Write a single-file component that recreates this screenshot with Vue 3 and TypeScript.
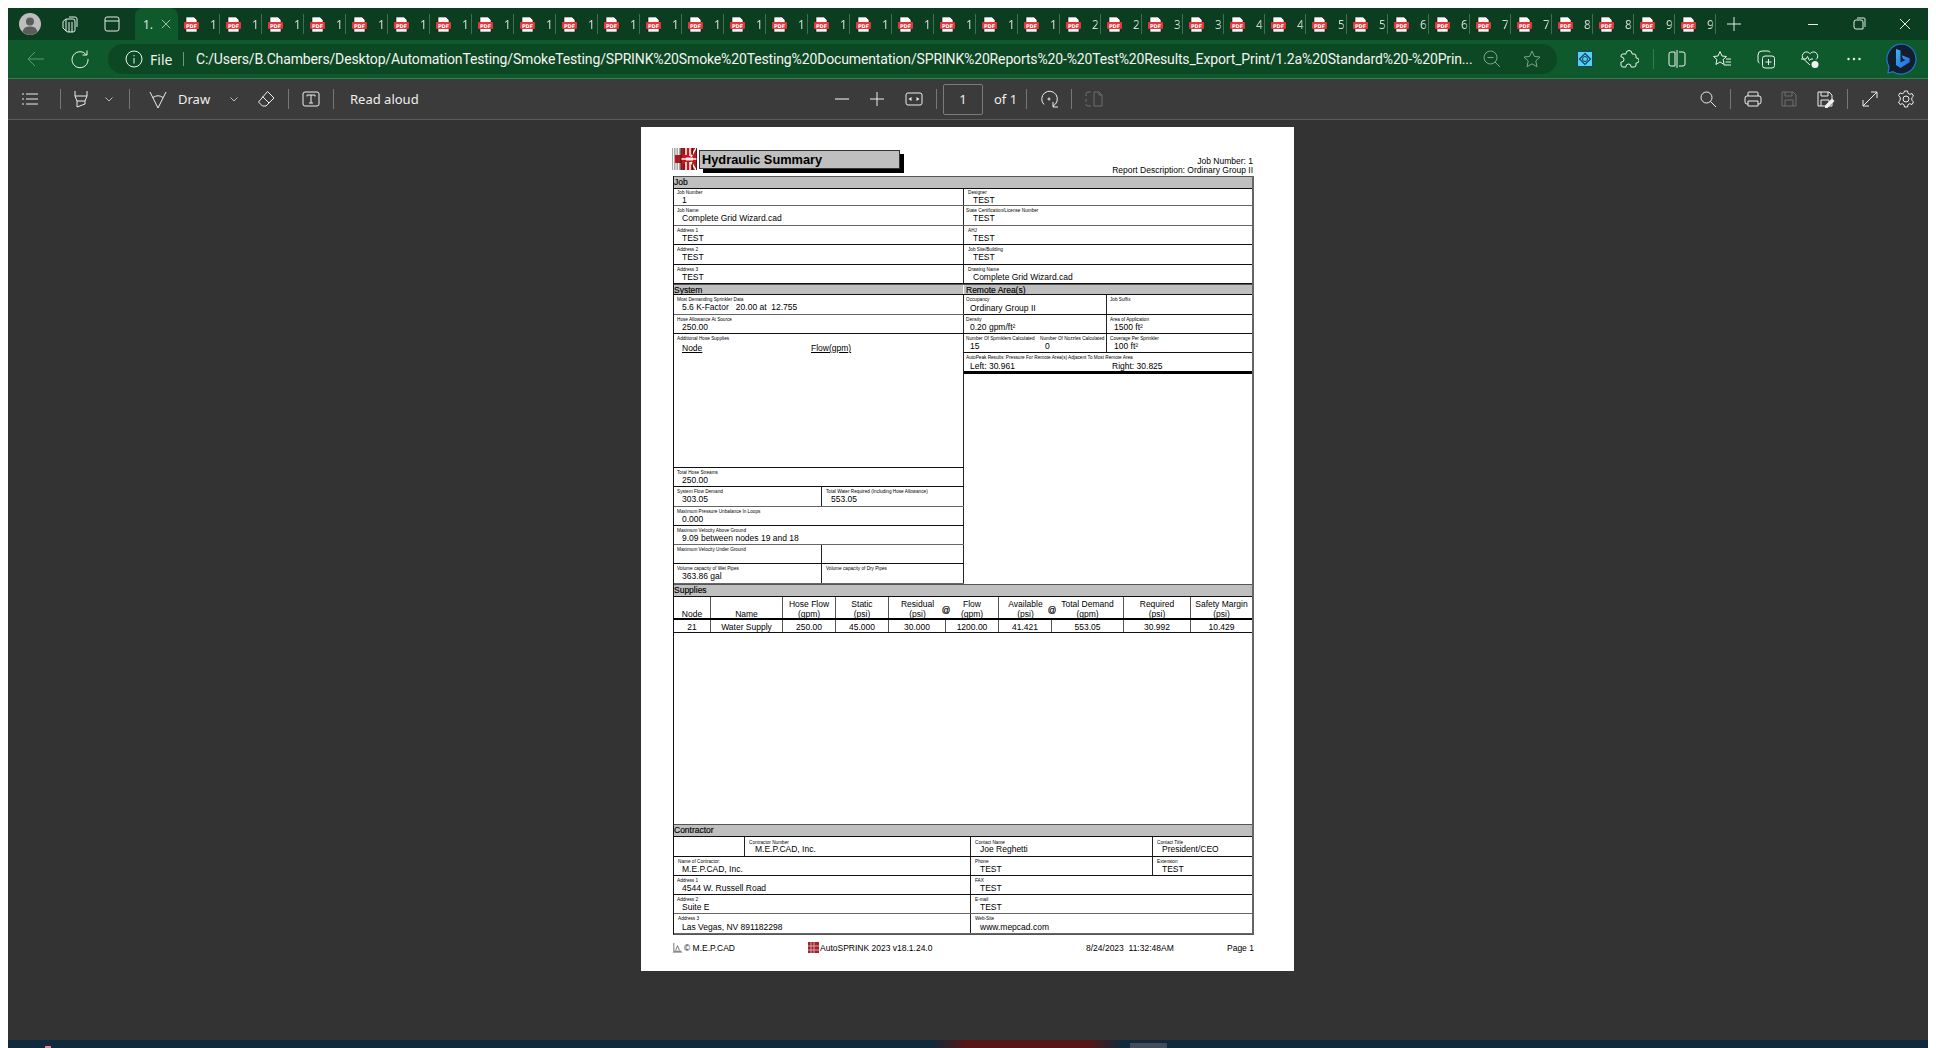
<template>
  <div class="desktop">
    <div class="window">
      <!-- tab strip -->
      <div class="tabstrip">
        <div class="avatar">
          <svg viewBox="0 0 22 22" width="22" height="22"><circle cx="11" cy="11" r="11" fill="#bdbdbd" /><circle cx="11" cy="8.5" r="4" fill="#5c5c5c" /><path d="M3.5 19c1-4.500 4-5.500 7.500-5.500s6.500 1 7.500 5.500a11 11 0 0 1-15 0z" fill="#5c5c5c" /></svg>
        </div>
        <svg class="ico ws" viewBox="0 0 20 20"><path d="M9 3h6a2 2 0 0 1 2 2v8M6 5h7a2 2 0 0 1 2 2v9a2 2 0 0 1-2 2H8a2 2 0 0 1-2-2zM3 7.500l3-2.500M3 7.500V14l3 3M9 8v10M12 8v10" /></svg>
        <svg class="ico acts" viewBox="0 0 20 20"><path d="M5 3h10a2 2 0 0 1 2 2v10a2 2 0 0 1-2 2H5a2 2 0 0 1-2-2V5a2 2 0 0 1 2-2zM3 7h14" /></svg>
        <div class="tab-active">
          <span>1.</span>
          <svg class="ico x" viewBox="0 0 20 20"><path d="M4 4l12 12M16 4L4 16" /></svg>
        </div>
        <div v-for="(n, i) in tabNumbers" :key="i" class="tab" :class="{ wide: i < 21 }">
          <svg class="pdf" viewBox="0 0 15 15" width="15" height="15">
            <path d="M2 0h8l3 3v12H2z" fill="#fff" stroke="#111" stroke-width=".6" />
            <rect x="0" y="5" width="15" height="7" rx="1" fill="#e8353a" />
            <text x="7.500" y="10.500" text-anchor="middle" class="pdf-text">PDF</text>
          </svg>
          <span class="tab-num">{{ n }}</span>
        </div>
        <svg class="ico plus" viewBox="0 0 20 20"><path d="M10 3v14M3 10h14" /></svg>
        <svg class="ico min" viewBox="0 0 20 20"><path d="M5 10.500h10" /></svg>
        <svg class="ico caption" viewBox="0 0 20 20"><path d="M5 8a2 2 0 0 1 2-2h5a2 2 0 0 1 2 2v7H7a2 2 0 0 1-2-2zM8 4h7a1 1 0 0 1 1 1v8" /></svg>
        <svg class="ico caption" viewBox="0 0 20 20"><path d="M5 5l10 10M15 5L5 15" /></svg>
      </div>

      <!-- address bar -->
      <div class="addressbar">
        <svg class="ico back" viewBox="0 0 20 20"><path d="M18 10H3M9 3l-7 7 7 7" /></svg>
        <svg class="ico reload" viewBox="0 0 20 20"><path d="M16.500 6A8 8 0 1 0 18 10M17 1.500V6h-4.500" /></svg>
        <div class="pill">
          <svg class="ico info" viewBox="0 0 20 20"><path d="M10 2a8 8 0 1 0 0 16 8 8 0 0 0 0-16zM10 9v5.500M10 6v1.300" /></svg>
          <span class="file">File</span>
          <i class="addr-sep"></i>
          <span class="url">C:/Users/B.Chambers/Desktop/AutomationTesting/SmokeTesting/SPRINK%20Smoke%20Testing%20Documentation/SPRINK%20Reports%20-%20Test%20Results_Export_Print/1.2a%20Standard%20-%20Prin...</span>
          <svg class="ico dim" viewBox="0 0 20 20"><path d="M8.500 2a6.500 6.500 0 1 0 0 13 6.500 6.500 0 0 0 0-13zM13 13l5 5M5.500 8.500h6" /></svg>
          <svg class="ico dim star" viewBox="0 0 20 20"><path d="M10 2l2.400 5.400 5.600.6-4.200 3.900 1.200 5.800-5-2.900-5 2.900 1.200-5.800L2 8l5.600-.6z" /></svg>
        </div>
        <svg class="ext" viewBox="0 0 16 16" width="16" height="16">
          <rect width="16" height="16" fill="#1c3f6e" />
          <rect x="1" y="1" width="14" height="14" fill="#52d3ee" />
          <path d="M8 2.500L13.500 8 8 13.500 2.500 8z" fill="none" stroke="#17406a" stroke-width="1.200" />
          <circle cx="8" cy="8" r="2.500" fill="none" stroke="#17406a" />
        </svg>
        <template v-for="(b, i) in addressButtons" :key="i">
          <i v-if="!b.d && !b.solid" class="bar-sep" :style="{ marginLeft: b.ml + 'px' }"></i>
          <svg v-else class="ico" viewBox="0 0 20 20" :style="{ marginLeft: b.ml + 'px' }">
            <path :d="b.d" />
            <path v-if="b.solid" :d="b.solid" class="solid" />
          </svg>
        </template>
        <svg class="bing" viewBox="0 0 32 32" width="32" height="32">
          <defs>
            <linearGradient id="bingFill" x1="0" y1="0" x2="1" y2="1">
              <stop offset="0" stop-color="#37b5f0" />
              <stop offset="1" stop-color="#2460e0" />
            </linearGradient>
          </defs>
          <path d="M16 1a15 15 0 1 1-8 27.700L3 30l1-6.500A15 15 0 0 1 16 1z" fill="#141d2b" stroke="#1c78d8" stroke-width="1.200" />
          <path d="M11 6l4.500 1.500v12l5-2.500-2.500-1.200-1.300-3.500 8 3v4L15.500 25 11 22z" fill="url(#bingFill)" />
        </svg>
      </div>

      <!-- pdf toolbar -->
      <div class="toolbar">
        <div v-for="(group, g) in toolGroups" :key="g" class="tool-group" :class="'group-' + g">
          <template v-for="(t, i) in group" :key="i">
            <i v-if="t.kind === 'sep'" class="tool-sep" :style="{ marginLeft: t.ml + 'px' }"></i>
            <svg v-else-if="t.kind === 'chev'" class="chev" viewBox="0 0 10 10" :style="{ marginLeft: t.ml + 'px' }"><path d="M1.500 3.500L5 7l3.500-3.500" /></svg>
            <span v-else-if="t.kind === 'text'" class="tool-text" :class="{ draw: t.label === 'Draw', count: t.label === 'of 1' }" :style="{ marginLeft: t.ml + 'px' }">{{ t.label }}</span>
            <span v-else-if="t.kind === 'input'" class="page-input" :style="{ marginLeft: t.ml + 'px' }">1</span>
            <svg v-else class="ico" :class="{ off: t.off, muted: t.muted }" viewBox="0 0 20 20" :style="{ marginLeft: t.ml + 'px' }">
              <path :d="t.d" />
              <path v-if="t.solid" :d="t.solid" class="solid" />
            </svg>
          </template>
        </div>
      </div>

      <!-- viewer -->
      <div class="viewer">
        <div class="page">
          <div class="report-head">
            <svg class="logo" viewBox="0 0 25 24" width="25" height="24">
              <rect width="25" height="24" fill="#fff" />
              <rect x="0" y="1" width="9" height="22" fill="#a8a8a8" />
              <path d="M1.500 1v22M4 1v22M6.500 1v22" stroke="#fff" stroke-width=".9" />
              <path d="M3 8h6v8H3z" fill="#b3171e" />
              <rect x="9" y="1" width="16" height="22" fill="#c8161d" />
              <path d="M14 1v7M18 1v8M24 1l-5 9M9 12h16M14 23v-8M18 23v-8M24 23l-5-8" stroke="#fff" stroke-width="1.500" />
              <path d="M9 1v22M12 1v6M12 17v6M20.500 1v7M20.500 16v7M24.700 1v22" stroke="#1c1c1c" stroke-width=".8" />
              <rect x="14" y="10.500" width="7" height="3" fill="#eee" />
            </svg>
            <div class="title-box">Hydraulic Summary</div>
            <div class="head-right">
              <div>Job Number: 1</div>
              <div>Report Description: Ordinary Group II</div>
            </div>
          </div>

          <div class="frame">
            <div class="band">Job</div>
            <div v-for="(r, i) in jobRows" :key="i" class="row" :class="{ soft: r.soft, tight: r.tight }" :style="{ height: r.h + 'px' }">
              <div v-for="(c, j) in r.cells" :key="j" class="cell" :class="{ open: c.open }" :style="{ flex: c.w ? '0 0 ' + c.w + 'px' : '1' }">
                <div class="label" :style="{ paddingLeft: c.lx + 'px' }">{{ c.label }}</div>
                <div class="vals"><span :style="{ paddingLeft: c.vx + 'px' }">{{ c.value }}</span></div>
              </div>
            </div>

            <div class="band split-band"><span>System</span><span>Remote Area(s)</span></div>
            <div class="columns">
              <div class="col-left">
                <div v-for="(r, i) in systemRows" :key="i" class="row" :class="{ soft: r.soft, drop2: r.drop === 2 }" :style="{ height: r.h + 'px' }">
                  <div v-for="(c, j) in r.cells" :key="j" class="cell" :class="{ open: c.open }" :style="{ flex: c.w ? '0 0 ' + c.w + 'px' : '1' }">
                    <div class="label" :style="{ paddingLeft: c.lx + 'px' }">{{ c.label }}</div>
                    <div class="vals"><span :style="{ paddingLeft: c.vx + 'px', width: c.v2x ? c.v2x + 'px' : 'auto' }"><u v-if="c.under">{{ c.value }}</u><template v-else>{{ c.value }}</template></span><span v-if="c.value2" class="under">{{ c.value2 }}</span></div>
                  </div>
                </div>
              </div>
              <div class="col-right">
                <div v-for="(r, i) in remoteRows" :key="i" class="row" :class="{ heavy: r.heavy, drop1: r.drop === 1 }" :style="{ height: r.h + 'px' }">
                  <div v-for="(c, j) in r.cells" :key="j" class="cell" :class="{ open: c.open }" :style="{ flex: c.w ? '0 0 ' + c.w + 'px' : '1' }">
                    <div class="label" :style="{ paddingLeft: c.lx + 'px' }">{{ c.label }}</div>
                    <div class="vals"><span :style="{ paddingLeft: c.vx + 'px', width: c.v2x ? c.v2x + 'px' : 'auto' }">{{ c.value }}</span><span v-if="c.value2">{{ c.value2 }}</span></div>
                  </div>
                </div>
              </div>
            </div>

            <div class="band">Supplies</div>
            <div class="sup-head">
              <div class="sup-col c-node">&nbsp;<br />Node</div>
              <div class="sup-col c-name">&nbsp;<br />Name</div>
              <div class="sup-col c-hose">Hose Flow<br />(gpm)</div>
              <div class="sup-col c-static">Static<br />(psi)</div>
              <div class="sup-col c-res no-line">Residual<br />(psi)</div>
              <div class="at">@</div>
              <div class="sup-col c-flow">Flow<br />(gpm)</div>
              <div class="sup-col c-avail no-line">Available<br />(psi)</div>
              <div class="at">@</div>
              <div class="sup-col c-total">Total Demand<br />(gpm)</div>
              <div class="sup-col c-req">Required<br />(psi)</div>
              <div class="sup-col c-safe">Safety Margin<br />(psi)</div>
            </div>
            <div class="sup-row">
              <div class="sup-cell c-node">21</div>
              <div class="sup-cell c-name">Water Supply</div>
              <div class="sup-cell c-hose">250.00</div>
              <div class="sup-cell c-static">45.000</div>
              <div class="sup-cell c-res">30.000</div>
              <div class="sup-cell c-flow">1200.00</div>
              <div class="sup-cell c-avail">41.421</div>
              <div class="sup-cell c-total">553.05</div>
              <div class="sup-cell c-req">30.992</div>
              <div class="sup-cell c-safe">10.429</div>
            </div>
            <div class="sup-empty"></div>

            <div class="band">Contractor</div>
            <div v-for="(r, i) in contractorRows" :key="i" class="row" :class="{ soft: r.soft, low: r.low, drop1: r.drop === 1 }" :style="{ height: r.h + 'px' }">
              <div v-for="(c, j) in r.cells" :key="j" class="cell" :class="{ open: c.open }" :style="{ flex: c.w ? '0 0 ' + c.w + 'px' : '1' }">
                <div class="label" :style="{ paddingLeft: c.lx + 'px' }">{{ c.label }}</div>
                <div class="vals"><span :style="{ paddingLeft: c.vx + 'px' }">{{ c.value }}</span></div>
              </div>
            </div>
          </div>

          <div class="report-foot">
            <div class="foot-a">
              <svg viewBox="0 0 12 12" width="11" height="11"><path d="M2 1v9h8M4 9l2-5 2 5M1 11h10" fill="none" stroke="#444" stroke-width=".8" /></svg>
              <span>© M.E.P.CAD</span>
            </div>
            <div class="foot-b">
              <svg viewBox="0 0 11 11" width="11" height="11"><rect width="11" height="11" fill="#a5222a" /><path d="M3 0v11M6 0v11M0 4h11M0 8h11" stroke="#ddd" stroke-width=".7" /></svg>
              <span>AutoSPRINK 2023 v18.1.24.0</span>
            </div>
            <div class="foot-c">8/24/2023&nbsp; 11:32:48AM</div>
            <div class="foot-d">Page 1</div>
          </div>
        </div>
      </div>
    </div>
    <div class="wallpaper">
      <i class="wp-glow"></i>
      <i class="wp-pin"></i>
      <i class="wp-thumb"></i>
    </div>
  </div>
</template>

<script setup lang="ts">
interface Cell {
  label: string
  value?: string
  value2?: string
  w?: number
  lx?: number
  vx?: number
  v2x?: number
  under?: boolean
  open?: boolean
}

interface Row {
  h: number
  cells: Cell[]
  soft?: boolean
  tight?: boolean
  heavy?: boolean
  low?: boolean
  drop?: number
}

interface Tool {
  kind: 'icon' | 'sep' | 'chev' | 'text' | 'input'
  ml: number
  d?: string
  solid?: string
  label?: string
  off?: boolean
  muted?: boolean
}

// 21 tabs titled 1.x, then two each for 2 to 9
const tabNumbers: number[] = [...Array(21).fill(1)]
for (let n = 2; n <= 9; n++) tabNumbers.push(n, n)

const savePath = 'M3 3h11l3 3v11H3zM6 3v4h7V3M6 17v-6h8v6'

const addressButtons: { ml: number; d?: string; solid?: string }[] = [
  { ml: 26, d: 'M7 5v-.5a3 3 0 0 1 6 0V5h2a2 2 0 0 1 2 2v2h.5a2.500 2.500 0 0 1 0 5H17v2a2 2 0 0 1-2 2h-3v-.5a2.500 2.500 0 0 0-5 0v.5H4a2 2 0 0 1-2-2v-3h.5a2.500 2.500 0 0 0 0-5H2V7a2 2 0 0 1 2-2z' },
  { ml: 14 },
  { ml: 13, d: 'M8 3H4a2 2 0 0 0-2 2v10a2 2 0 0 0 2 2h4zM12 3h4a2 2 0 0 1 2 2v10a2 2 0 0 1-2 2h-4M10 1v18' },
  { ml: 25, d: 'M8 2.500l2 4.500 4.500.5-3.400 3 1 5L8 13l-4.100 2.500 1-5-3.400-3L6 7zM14 10h5M13.500 13h5.500M12 16h7' },
  { ml: 24, d: 'M14 3.500a2 2 0 0 0-2-1.500H6a4 4 0 0 0-4 4v6a2 2 0 0 0 1.500 2M9 7h7a2.500 2.500 0 0 1 2.500 2.500v7A2.500 2.500 0 0 1 16 19H9a2.500 2.500 0 0 1-2.500-2.500v-7A2.500 2.500 0 0 1 9 7zM12.500 10v6M9.500 13h6' },
  { ml: 24, d: 'M10 16L3 9.500a4.200 4.200 0 0 1 7-4.700 4.200 4.200 0 0 1 7 4.700l-1 1M1 10h5l1.500-2.500 2 4 1.500-1.500h2', solid: 'M15 12a3.500 3.500 0 1 0 0 7 3.500 3.500 0 0 0 0-7z' },
  { ml: 24, d: '', solid: 'M4.500 8.800a1.200 1.200 0 1 0 0 2.400 1.200 1.200 0 0 0 0-2.400zM10 8.800a1.200 1.200 0 1 0 0 2.400 1.200 1.200 0 0 0 0-2.400zM15.500 8.800a1.200 1.200 0 1 0 0 2.400 1.200 1.200 0 0 0 0-2.400z' }
]

const toolGroups: Tool[][] = [
  [
    { kind: 'icon', ml: 12, d: 'M6 5h12M6 10h12M6 15h12M2 5h2M2 10h2M2 15h2' },
    { kind: 'sep', ml: 20 },
    { kind: 'icon', ml: 10, d: 'M4 2v5h12V2M4 7l2 5h8l2-5M6 12v6l8-3v-3' },
    { kind: 'chev', ml: 13 },
    { kind: 'sep', ml: 15 },
    { kind: 'icon', ml: 18, d: 'M2 3l8 16 8-16M5 8.500q5-3.500 10 0' },
    { kind: 'text', ml: 10, label: 'Draw' },
    { kind: 'chev', ml: 19 },
    { kind: 'icon', ml: 17, d: 'M11.500 2.500l6.500 6.500-8 8H6.500l-4-4zM6.500 7.500l6.500 6.500' },
    { kind: 'sep', ml: 12 },
    { kind: 'icon', ml: 12, d: 'M4 3h12a2 2 0 0 1 2 2v10a2 2 0 0 1-2 2H4a2 2 0 0 1-2-2V5a2 2 0 0 1 2-2zM6 7.500V6h8v1.500M10 6v8M8 14h4' },
    { kind: 'sep', ml: 12 },
    { kind: 'text', ml: 16, label: 'Read aloud' }
  ],
  [
    { kind: 'icon', ml: 0, d: 'M3 10h14', muted: true },
    { kind: 'icon', ml: 15, d: 'M10 3v14M3 10h14' },
    { kind: 'icon', ml: 17, d: 'M4 4h12a2 2 0 0 1 2 2v8a2 2 0 0 1-2 2H4a2 2 0 0 1-2-2V6a2 2 0 0 1 2-2z', solid: 'M4.500 10l3-2v4zM15.500 10l-3-2v4z' },
    { kind: 'sep', ml: 12 },
    { kind: 'input', ml: 6 },
    { kind: 'text', ml: 11, label: 'of 1' },
    { kind: 'sep', ml: 13 },
    { kind: 'icon', ml: 12, d: 'M5 15.500A7.800 7.800 0 1 1 14 17M14 13v5h5M11 10a1 1 0 1 1-2 0 1 1 0 0 1 2 0z' },
    { kind: 'sep', ml: 12 },
    { kind: 'icon', ml: 12, off: true, d: 'M10 3h5l3 3v11h-8zM15 3v3h3M7 3H4a2 2 0 0 0-2 2v2M2 10v3M2 15a2 2 0 0 0 2 2h3' }
  ],
  [
    { kind: 'icon', ml: 0, d: 'M8.500 3a5.500 5.500 0 1 0 0 11 5.500 5.500 0 0 0 0-11zM12.500 12.500L18 18' },
    { kind: 'sep', ml: 12 },
    { kind: 'icon', ml: 12, d: 'M5 7V4a1 1 0 0 1 1-1h8a1 1 0 0 1 1 1v3M5 15H4a2 2 0 0 1-2-2V9a2 2 0 0 1 2-2h12a2 2 0 0 1 2 2v4a2 2 0 0 1-2 2h-1M5 12h10v5H5z' },
    { kind: 'icon', ml: 16, off: true, d: savePath },
    { kind: 'icon', ml: 16, d: savePath, solid: 'M17 9.500l2.500 2.500-7 7H10v-2.500z' },
    { kind: 'sep', ml: 12 },
    { kind: 'icon', ml: 12, d: 'M11 3h6v6M17 3L3 17M3 11v6h6' },
    { kind: 'icon', ml: 16, d: 'M10 7a3 3 0 1 0 0 6 3 3 0 0 0 0-6zM8.500 2h3l.5 2.300 1.800 1 2.200-.8 1.500 2.600-1.700 1.600v2.600l1.700 1.600-1.500 2.600-2.200-.8-1.800 1-.5 2.300h-3l-.5-2.300-1.800-1-2.200.8-1.500-2.600 1.700-1.600V8.100L2.500 6.500 4 3.900l2.200.8 1.800-1z' }
  ]
]

const jobRows: Row[] = [
  { h: 17, tight: true, soft: true, cells: [
    { label: 'Job Number', value: '1', w: 290, lx: 3, vx: 8 },
    { label: 'Designer', value: 'TEST', lx: 4, vx: 9 }
  ] },
  { h: 20, soft: true, cells: [
    { label: 'Job Name:', value: 'Complete Grid Wizard.cad', w: 290, lx: 3, vx: 8 },
    { label: 'State Certification/License Number', value: 'TEST', lx: 2, vx: 9 }
  ] },
  { h: 19, cells: [
    { label: 'Address 1', value: 'TEST', w: 290, lx: 3, vx: 8 },
    { label: 'AHJ', value: 'TEST', lx: 4, vx: 9 }
  ] },
  { h: 20, cells: [
    { label: 'Address 2', value: 'TEST', w: 290, lx: 3, vx: 8 },
    { label: 'Job Site/Building', value: 'TEST', lx: 4, vx: 9 }
  ] },
  { h: 19, cells: [
    { label: 'Address 3', value: 'TEST', w: 290, lx: 3, vx: 8 },
    { label: 'Drawing Name', value: 'Complete Grid Wizard.cad', lx: 4, vx: 9 }
  ] }
]

const systemRows: Row[] = [
  { h: 20, soft: true, cells: [{ label: 'Most Demanding Sprinkler Data', value: '5.6 K-Factor   20.00 at  12.755', lx: 3, vx: 8 }] },
  { h: 19, cells: [{ label: 'Hose Allowance At Source', value: '250.00', lx: 3, vx: 8 }] },
  { h: 134, drop: 2, cells: [{ label: 'Additional Hose Supplies', value: 'Node', value2: 'Flow(gpm)', under: true, v2x: 129, lx: 3, vx: 8 }] },
  { h: 19, cells: [{ label: 'Total Hose Streams', value: '250.00', lx: 3, vx: 8 }] },
  { h: 20, soft: true, cells: [
    { label: 'System Flow Demand', value: '303.05', w: 148, lx: 3, vx: 8 },
    { label: 'Total Water Required (Including Hose Allowance)', value: '553.05', lx: 4, vx: 9 }
  ] },
  { h: 19, cells: [{ label: 'Maximum Pressure Unbalance In Loops', value: '0.000', lx: 3, vx: 8 }] },
  { h: 19, soft: true, cells: [{ label: 'Maximum Velocity Above Ground', value: '9.09 between nodes 19 and 18', lx: 3, vx: 8 }] },
  { h: 19, cells: [
    { label: 'Maximum Velocity Under Ground', w: 148, lx: 3 },
    { label: '', lx: 4 }
  ] },
  { h: 20, soft: true, cells: [
    { label: 'Volume capacity of Wet Pipes', value: '363.86 gal', w: 148, lx: 3, vx: 8 },
    { label: 'Volume capacity of Dry Pipes', lx: 4 }
  ] }
]

const remoteRows: Row[] = [
  { h: 20, drop: 1, cells: [
    { label: 'Occupancy', value: 'Ordinary Group II', w: 143, lx: 2, vx: 6 },
    { label: 'Job Suffix', lx: 3 }
  ] },
  { h: 19, cells: [
    { label: 'Density', value: '0.20 gpm/ft²', w: 143, lx: 2, vx: 6 },
    { label: 'Area of Application', value: '1500 ft²', lx: 3, vx: 7 }
  ] },
  { h: 19, cells: [
    { label: 'Number Of Sprinklers Calculated', value: '15', w: 76, lx: 2, vx: 6, open: true },
    { label: 'Number Of Nozzles Calculated', value: '0', w: 67, lx: 0, vx: 5 },
    { label: 'Coverage Per Sprinkler', value: '100 ft²', lx: 3, vx: 7 }
  ] },
  { h: 21, heavy: true, drop: 1, cells: [
    { label: 'AutoPeak Results: Pressure For Remote Area(s) Adjacent To Most Remote Area', value: 'Left: 30.961', value2: 'Right: 30.825', v2x: 142, lx: 2, vx: 6 }
  ] }
]

const contractorRows: Row[] = [
  { h: 20, low: true, cells: [
    { label: '', w: 71 },
    { label: 'Contractor Number', value: 'M.E.P.CAD, Inc.', w: 226, lx: 4, vx: 10 },
    { label: 'Contact Name', value: 'Joe Reghetti', w: 182, lx: 4, vx: 9 },
    { label: 'Contact Title', value: 'President/CEO', lx: 4, vx: 9 }
  ] },
  { h: 19, cells: [
    { label: 'Name of Contractor:', value: 'M.E.P.CAD, Inc.', w: 297, lx: 4, vx: 8 },
    { label: 'Phone', value: 'TEST', w: 182, lx: 4, vx: 9 },
    { label: 'Extension', value: 'TEST', lx: 4, vx: 9 }
  ] },
  { h: 19, cells: [
    { label: 'Address 1', value: '4544 W. Russell Road', w: 297, lx: 3, vx: 8 },
    { label: 'FAX', value: 'TEST', lx: 4, vx: 9 }
  ] },
  { h: 19, soft: true, cells: [
    { label: 'Address 2', value: 'Suite E', w: 297, lx: 3, vx: 8 },
    { label: 'E-mail', value: 'TEST', lx: 4, vx: 9 }
  ] },
  { h: 20, soft: true, drop: 1, cells: [
    { label: 'Address 3', value: 'Las Vegas, NV 891182298', w: 297, lx: 4, vx: 8 },
    { label: 'Web-Site', value: 'www.mepcad.com', lx: 4, vx: 9 }
  ] }
]
</script>

<style scoped>
.desktop {
  width: 1936px;
  height: 1048px;
  padding: 8px 8px 0;
  box-sizing: border-box;
  background: #fff;
  display: flex;
  flex-direction: column;
  font-family: "Noto Sans", "Open Sans", sans-serif;
  overflow: hidden;
}

.window {
  height: 1032px;
  display: flex;
  flex-direction: column;
  flex: none;
}

.wallpaper {
  height: 8px;
  background: #11293c;
  position: relative;
  overflow: hidden;
}

.wp-glow {
  position: absolute;
  left: 924px;
  top: 0;
  width: 190px;
  height: 8px;
  background: linear-gradient(90deg, #11293c, #561616 18%, #561616 82%, #11293c);
}

.wp-pin {
  position: absolute;
  left: 37px;
  top: 6px;
  width: 6px;
  height: 2px;
  background: #e58aa0;
}

.wp-thumb {
  position: absolute;
  left: 1122px;
  top: 3px;
  width: 37px;
  height: 5px;
  background: #444c58;
}

.ico {
  width: 20px;
  height: 20px;
  flex: none;
  fill: none;
  stroke: currentColor;
  stroke-width: 1;
}

.solid {
  fill: currentColor;
  stroke: none;
}

/* tab strip */
.tabstrip {
  height: 32px;
  background: #0b3e20;
  display: flex;
  align-items: center;
  color: #e6ece8;
  flex: none;
}

.avatar {
  margin-left: 11px;
  width: 22px;
  height: 22px;
  flex: none;
}

.ws {
  margin-left: 19px;
}

.acts {
  margin-left: 22px;
}

.tab-active {
  margin-left: 13px;
  width: 43px;
  height: 32px;
  box-sizing: border-box;
  flex: none;
  background: #0f5a2d;
  border-radius: 8px 8px 0 0;
  display: flex;
  align-items: center;
  padding-left: 8px;
  font-size: 12px;
  color: #dfe8e2;
}

.tab-active .x {
  width: 14px;
  height: 14px;
  margin-left: 6px;
}

.tab {
  width: 41px;
  height: 20px;
  box-sizing: border-box;
  flex: none;
  display: flex;
  align-items: center;
  padding-left: 6px;
  border-right: 1px solid #41704f;
}

.tab.wide {
  width: 42px;
}

.pdf {
  flex: none;
}

.pdf-text {
  font-family: "DejaVu Sans", sans-serif;
  font-size: 5px;
  font-weight: 700;
  fill: #fff;
}

.tab-num {
  margin-left: 11px;
  width: 8px;
  overflow: hidden;
  font-size: 12px;
  color: #d4ded7;
  -webkit-mask-image: linear-gradient(90deg, #000 50%, transparent);
  mask-image: linear-gradient(90deg, #000 50%, transparent);
}

.plus {
  margin-left: 8px;
}

.min {
  margin-left: 59px;
}

.caption {
  margin-left: 26px;
}

/* address bar */
.addressbar {
  height: 39px;
  box-sizing: border-box;
  background: #0f5a2d;
  border-bottom: 1px solid #2f7f4a;
  display: flex;
  align-items: center;
  color: #eef3ef;
  flex: none;
}

.back {
  margin-left: 18px;
  color: #5f9673;
}

.reload {
  margin-left: 24px;
}

.pill {
  margin-left: 18px;
  width: 1449px;
  height: 30px;
  flex: none;
  background: #0c4823;
  border-radius: 15px;
  display: flex;
  align-items: center;
}

.info {
  margin-left: 16px;
}

.file {
  margin-left: 6px;
  width: 20px;
  font-size: 14px;
}

.addr-sep {
  margin-left: 13px;
  width: 1px;
  height: 14px;
  background: #6d9a7d;
  flex: none;
}

.url {
  margin-left: 12px;
  width: 1286px;
  flex: none;
  font-family: Roboto, "Noto Sans", sans-serif;
  font-size: 14px;
  letter-spacing: -0.14px;
  white-space: nowrap;
  color: #f2f5f3;
}

.dim {
  color: #7ea48b;
}

.star {
  margin-left: 20px;
}

.ext {
  margin-left: 20px;
  flex: none;
}

.bar-sep {
  width: 1px;
  height: 20px;
  background: #2f7f4a;
  flex: none;
}

.bing {
  margin-left: 21px;
  flex: none;
}

/* pdf toolbar */
.toolbar {
  height: 41px;
  box-sizing: border-box;
  background: #3b3b3b;
  border-bottom: 1px solid #5a5a5a;
  display: grid;
  grid-template-columns: 1fr auto 1fr;
  color: #efefef;
  flex: none;
}

.tool-group {
  display: flex;
  align-items: center;
}

.group-2 {
  justify-content: flex-end;
  padding-right: 12px;
}

.tool-sep {
  width: 1px;
  height: 20px;
  background: #777;
  flex: none;
}

.chev {
  width: 10px;
  height: 10px;
  flex: none;
  fill: none;
  stroke: #bdbdbd;
}

.tool-text {
  font-size: 13px;
  white-space: nowrap;
}

.draw {
  width: 32px;
}

.count {
  width: 19px;
}

.page-input {
  width: 40px;
  height: 31px;
  box-sizing: border-box;
  border: 1px solid #7b7b7b;
  border-radius: 2px;
  display: flex;
  align-items: center;
  justify-content: center;
  font-size: 13px;
}

.off {
  color: #6f6f6f;
}

.muted {
  color: #b5b5b5;
  stroke-width: 1.6;
}

/* report page */
.viewer {
  flex: 1;
  background: #333;
  display: flex;
  justify-content: flex-start;
  padding: 7px 0 0 633px;
  min-height: 0;
}

.page {
  width: 653px;
  height: 844px;
  box-sizing: border-box;
  background: #fff;
  padding: 20px 40px 0 32px;
  font-family: "Liberation Sans", Arial, sans-serif;
  color: #000;
}

.report-head {
  height: 29px;
  display: flex;
  align-items: flex-start;
}

.logo {
  margin-left: -1px;
  flex: none;
}

.title-box {
  margin: 3px 0 0 2px;
  width: 201px;
  height: 19px;
  box-sizing: border-box;
  background: #bfbfbf;
  border: 1px solid #333;
  box-shadow: 4px 4px 0 #000;
  padding-left: 2px;
  font-size: 12.800px;
  font-weight: 700;
  line-height: 17px;
  color: #000;
}

.head-right {
  margin: 10px 1px 0 auto;
  text-align: right;
  font-size: 8.500px;
  line-height: 9px;
}

.frame {
  width: 581px;
  box-sizing: border-box;
  border-left: 1px solid #111;
  border-right: 2px solid #666;
  border-bottom: 1px solid #555;
}

.band {
  height: 13px;
  box-sizing: border-box;
  background: #bfbfbf;
  border-top: 1px solid #555;
  border-bottom: 1px solid #111;
  font-size: 8.500px;
  line-height: 11px;
  white-space: pre;
  -webkit-text-stroke: 0.15px #000;
}

.split-band {
  display: flex;
  height: 11px;
  line-height: 10px;
}

.split-band span:first-child {
  width: 290px;
  flex: none;
  box-sizing: border-box;
  border-right: 1px solid #fff;
}

.split-band span:last-child {
  padding-left: 2px;
}

.columns {
  display: flex;
  height: 289px;
}

.col-left {
  width: 290px;
  flex: none;
}

.col-right {
  flex: 1;
  min-width: 0;
}

.row {
  display: flex;
  box-sizing: border-box;
  border-bottom: 1px solid #111;
}

.row.soft {
  border-bottom-color: #666;
}

.row.heavy {
  border-bottom: 3px solid #000;
}

.cell {
  box-sizing: border-box;
  border-right: 1px solid #222;
  padding-top: 2px;
  min-width: 0;
  overflow: hidden;
}

.cell:last-child,
.cell.open {
  border-right: 0;
}

.col-left .cell:last-child {
  border-right: 1px solid #222;
}

.tight .cell {
  padding-top: 1px;
}

.low .cell {
  padding-top: 3px;
}

.low .vals {
  line-height: 9px;
}

.drop1 .vals {
  margin-top: 1px;
}

.drop2 .vals {
  margin-top: 2px;
}

.label {
  height: 5px;
  line-height: 5px;
  font-size: 4.700px;
  white-space: nowrap;
}

.vals {
  display: flex;
  height: 11px;
  font-size: 8.500px;
  line-height: 11px;
  white-space: pre;
}

.vals span {
  flex: none;
}

.under {
  text-decoration: underline;
}

.sup-head,
.sup-row {
  display: flex;
  text-align: center;
  font-size: 8.500px;
}

.sup-head {
  height: 23px;
  box-sizing: border-box;
  border-bottom: 2px solid #000;
  line-height: 10px;
}

.sup-row {
  height: 13px;
  box-sizing: border-box;
  border-bottom: 1px solid #111;
  line-height: 15px;
}

.sup-col,
.sup-cell {
  box-sizing: border-box;
  flex: none;
  border-right: 1px solid #555;
  white-space: nowrap;
}

.sup-col {
  padding-top: 2px;
}

.no-line {
  border-right: 0;
}

.at {
  width: 0;
  display: flex;
  justify-content: center;
  align-items: center;
  font-size: 8.500px;
  padding-top: 5px;
  -webkit-text-stroke: 0.2px #000;
}

.c-node { width: 37px; }
.c-name { width: 72px; }
.c-hose { width: 53px; }
.c-static { width: 53px; }
.c-res { width: 57px; }
.c-flow { width: 53px; }
.c-avail { width: 53px; }
.c-total { width: 72px; }
.c-req { width: 67px; }
.c-safe { width: 61px; border-right: 0; }

.sup-empty {
  height: 191px;
}

/* footer */
.report-foot {
  display: flex;
  align-items: center;
  margin-top: 6px;
  height: 13px;
  font-size: 8.500px;
  width: 582px;
}

.foot-a,
.foot-b {
  display: flex;
  align-items: center;
  gap: 1px;
}

.foot-a {
  width: 136px;
  margin-left: -1px;
}

.foot-b {
  width: 278px;
}

.foot-c {
  width: 141px;
}

.foot-d {
  white-space: nowrap;
}
</style>

<style>
html,
body {
  margin: 0;
  background: #fff;
}
</style>
